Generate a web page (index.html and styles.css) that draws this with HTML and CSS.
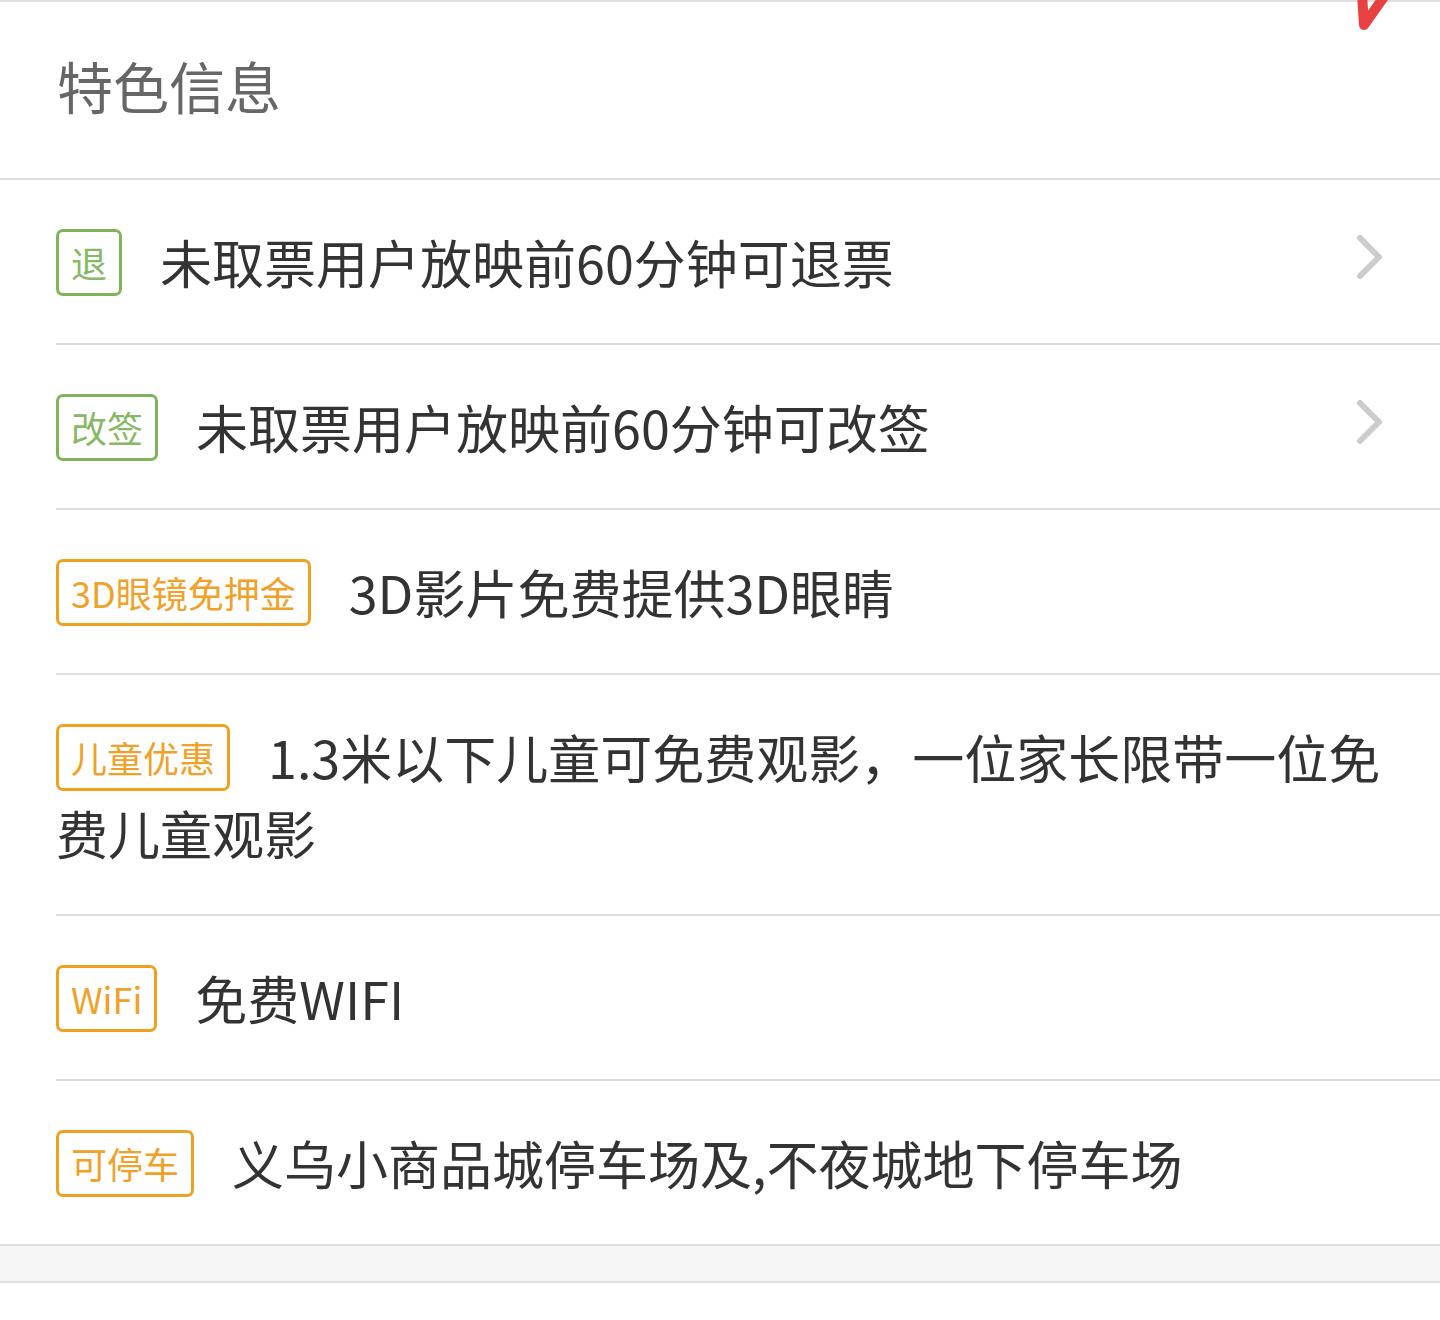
FILE: index.html
```html
<!doctype html>
<html>
  <head>
    <meta charset="UTF-8" />
    <link rel="stylesheet" href="styles.css">
  </head>
  <body>
    <div class="panel">
      <div class="title">特色信息</div>
      <div class="list">
        <div class="item">
          <div class="item-body"><span class="tag tag-green">退</span>未取票用户放映前60分钟可退票</div>
          <svg class="chevron" viewBox="0 0 30 50" width="30" height="50"><path d="M5 5 L24 24 L5 43" /></svg>
        </div>
        <div class="item">
          <div class="item-body"><span class="tag tag-green">改签</span>未取票用户放映前60分钟可改签</div>
          <svg class="chevron" viewBox="0 0 30 50" width="30" height="50"><path d="M5 5 L24 24 L5 43" /></svg>
        </div>
        <div class="item">
          <div class="item-body"><span class="tag tag-orange">3D眼镜免押金</span>3D影片免费提供3D眼睛</div>
        </div>
        <div class="item">
          <div class="item-body"><span class="tag tag-orange">儿童优惠</span>1.3米以下儿童可免费观影，一位家长限带一位免费儿童观影</div>
        </div>
        <div class="item">
          <div class="item-body"><span class="tag tag-orange">WiFi</span>免费WIFI</div>
        </div>
        <div class="item">
          <div class="item-body"><span class="tag tag-orange">可停车</span>义乌小商品城停车场及,不夜城地下停车场</div>
        </div>
      </div>
      <div class="gap"></div>
      <svg class="mark" viewBox="0 0 40 34" width="40" height="34"><path d="M8 -6 L10 25 L32 -6" /></svg>
    </div>
  </body>
</html>
```

FILE: styles.css
```css
html,
body {
  height: 100%;
}
body {
  background: white;
  color: #333;
  font-family: "Noto Sans CJK SC", "Noto Sans", sans-serif;
  margin: 0;
  overflow: hidden;
}
.panel {
  border-top: 2px solid #dedede;
  position: relative;
}
.title {
  align-items: center;
  border-bottom: 2px solid #dedede;
  box-sizing: border-box;
  color: #666;
  display: flex;
  font-size: 56px;
  height: 178px;
  padding: 0 0 12px 57px;
}
.list {
  border-bottom: 2px solid #dedede;
}
.item {
  align-items: center;
  border-bottom: 2px solid #dedede;
  display: flex;
  margin-left: 56px;
  padding: 44px 56px 43px 0;
}
.item:last-child {
  border-bottom: none;
}
.item-body {
  flex-grow: 1;
  font-size: 52px;
  line-height: 76px;
}
.tag {
  border: 3px solid;
  border-radius: 7px;
  display: inline-block;
  font-size: 36px;
  line-height: 61px;
  margin: 5px 38px 0 0;
  padding: 0 12px;
  vertical-align: top;
}
.tag-green {
  border-color: #7fb45a;
  color: #86b866;
}
.tag-orange {
  border-color: #f0a020;
  color: #f0a128;
}
.chevron {
  fill: none;
  margin-bottom: 8px;
  margin-right: -1px;
  stroke: #cccccc;
  stroke-linecap: round;
  stroke-linejoin: round;
  stroke-width: 6;
}
.gap {
  background: #f5f5f5;
  border-bottom: 2px solid #dedede;
  height: 35px;
}
.mark {
  fill: none;
  position: absolute;
  right: 46px;
  stroke: #e84141;
  stroke-linecap: round;
  stroke-linejoin: round;
  stroke-width: 10;
  top: -2px;
}
```
